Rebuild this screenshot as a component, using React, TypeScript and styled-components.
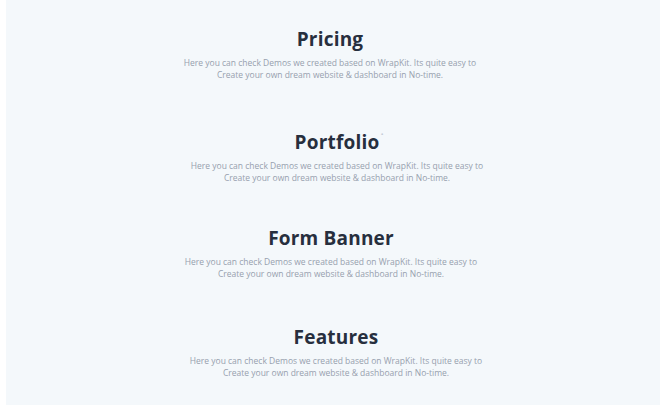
import styled, { createGlobalStyle } from "styled-components";

const GlobalStyle = createGlobalStyle`
  html, body {
    margin: 0;
    padding: 0;
    background: #ffffff;
  }
  body {
    font-family: "Open Sans", "Liberation Sans", sans-serif;
  }
`;

const Page = styled.div`
  display: flex;
  height: 405px;
  padding-left: 6px;
  overflow: hidden;
`;

const Panel = styled.main`
  flex: 1;
  background: #f4f8fb;
  display: flex;
  flex-direction: column;
  padding-top: 26px;
`;

const Section = styled.section<{ $shift?: number; $gap?: number }>`
  display: flex;
  flex-direction: column;
  align-items: center;
  text-align: center;
  margin-bottom: ${(p) => p.$gap ?? 46}px;
  transform: translateX(${(p) => p.$shift ?? 0}px);
`;

const Title = styled.h2`
  margin: 0 0 5px;
  font-family: "Open Sans", "Liberation Sans", sans-serif;
  font-weight: 700;
  font-size: 19px;
  line-height: 26px;
  color: #272f3e;
  letter-spacing: 0.2px;
  position: relative;
`;

const Mark = styled.span`
  position: absolute;
  top: 2px;
  right: -4px;
  font-size: 6px;
  line-height: 6px;
  color: #c5ccd6;
`;

const Subtitle = styled.p`
  margin: 0;
  font-size: 8.5px;
  line-height: 12px;
  color: #97a0ae;
`;

const sections = [
  { title: "Pricing", shift: -3, gap: 48 },
  { title: "Portfolio", shift: 4, gap: 41, mark: true },
  { title: "Form Banner", shift: -2, gap: 44 },
  { title: "Features", shift: 3, gap: 0 },
];

export default function App() {
  return (
    <>
      <GlobalStyle />
      <Page>
        <Panel>
          {sections.map((s) => (
            <Section key={s.title} $shift={s.shift} $gap={s.gap}>
              <Title>
                {s.title}
                {s.mark && <Mark>•</Mark>}
              </Title>
              <Subtitle>
                Here you can check Demos we created based on WrapKit. Its quite easy to
                <br />
                Create your own dream website &amp; dashboard in No-time.
              </Subtitle>
            </Section>
          ))}
        </Panel>
      </Page>
    </>
  );
}
